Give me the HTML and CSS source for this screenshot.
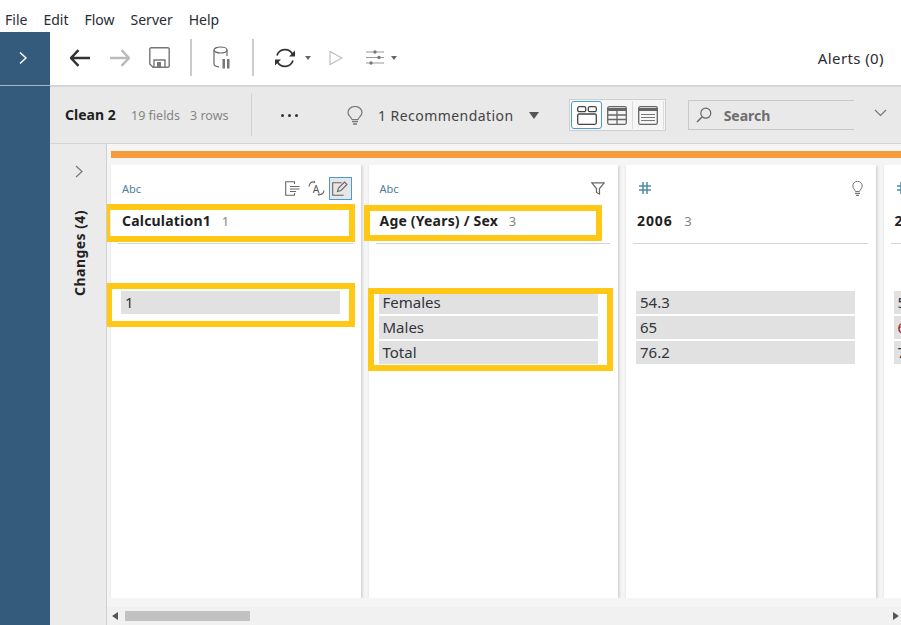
FILE: index.html
```html
<!DOCTYPE html>
<html lang="en">
<head>
    <meta charset="UTF-8">
    <meta name="viewport" content="width=device-width, initial-scale=1.0">
    <title>Clean 2 - Flow</title>
    <link rel="stylesheet" href="styles.css">
</head>
<body>
    <nav class="menu">
        <span>File</span>
        <span>Edit</span>
        <span>Flow</span>
        <span>Server</span>
        <span>Help</span>
    </nav>
    <div class="app">
        <aside class="sidebar">
            <div class="sidebar-top">
                <svg width="10" height="14" viewBox="0 0 10 14"><path d="M2 1.500 8 7l-6 5.500" fill="none" stroke="#fff" stroke-width="1.400"/></svg>
            </div>
        </aside>
        <div class="main">
            <div class="toolbar">
                <svg class="tool-back" width="20" height="18" viewBox="0 0 20 18"><path d="M20 9H1M8.500 1.200 1 9l7.500 7.800" fill="none" stroke="#333" stroke-width="2.500"/></svg>
                <svg class="tool-forward" width="20" height="18" viewBox="0 0 20 18"><path d="M0 9h19M11.500 1.200 19 9l-7.500 7.800" fill="none" stroke="#bbb" stroke-width="2.500"/></svg>
                <svg class="tool-save" width="21" height="21" viewBox="0 0 21 21"><path d="M2 .8h17a1.200 1.200 0 0 1 1.200 1.200v17a1.200 1.200 0 0 1-1.200 1.200H4L.8 17V2A1.200 1.200 0 0 1 2 .8z" fill="none" stroke="#777" stroke-width="1.400"/><path d="M5 20v-7h11v7" fill="none" stroke="#777" stroke-width="1.400"/><rect x="8" y="15" width="4" height="5" fill="#777"/></svg>
                <i class="tool-sep sep-one"></i>
                <svg class="tool-db" width="18" height="23" viewBox="0 0 18 23"><ellipse cx="7.500" cy="4" rx="6.500" ry="3" fill="none" stroke="#666" stroke-width="1.200"/><path d="M1 4v14c0 1.500 2 2.500 5 2.800M14 4v6" fill="none" stroke="#666" stroke-width="1.200"/><rect x="9.500" y="13" width="2.500" height="9.500" fill="#777"/><rect x="14" y="13" width="2.500" height="9.500" fill="#777"/></svg>
                <i class="tool-sep sep-two"></i>
                <svg class="tool-refresh" width="22" height="22" viewBox="0 0 22 22"><path d="M3 8.500A8.500 8.500 0 0 1 18.500 7M19 13.500A8.500 8.500 0 0 1 3.500 15" fill="none" stroke="#333" stroke-width="1.700"/><path d="M21 3.500v6h-6zM1 18.500v-6h6z" fill="#333"/></svg>
                <i class="caret caret-refresh"></i>
                <svg class="tool-play" width="14" height="16" viewBox="0 0 14 16"><path d="M1 1.500 13 8 1 14.500z" fill="none" stroke="#bbb" stroke-width="1.100"/></svg>
                <svg class="tool-sliders" width="18" height="15" viewBox="0 0 18 15"><path d="M0 2h18M0 7.500h18M0 13h18" stroke="#999" stroke-width="1"/><circle cx="9" cy="2" r="1.700" fill="#777"/><circle cx="13" cy="7.500" r="1.700" fill="#777"/><circle cx="5" cy="13" r="1.700" fill="#777"/></svg>
                <i class="caret caret-sliders"></i>
                <span class="alerts">Alerts (0)</span>
            </div>
            <div class="header">
                <strong class="step-name">Clean 2</strong>
                <span class="step-meta">19 fields</span>
                <span class="step-meta step-rows">3 rows</span>
                <i class="header-sep"></i>
                <span class="dots"><i></i><i></i><i></i></span>
                <svg class="bulb" width="16" height="19" viewBox="0 0 16 19"><path d="M5 13.500C4.500 11 1 10 1 6.500a7 6 0 0 1 14 0c0 3.500-3.500 4.500-4 7z" fill="none" stroke="#777" stroke-width="1.200"/><path d="M5 15.500h6M6 18h4" stroke="#777" stroke-width="1.400"/></svg>
                <span class="recommend">1 Recommendation</span>
                <i class="caret caret-recommend"></i>
                <div class="views">
                    <span class="view view-active">
                        <svg width="20" height="19" viewBox="0 0 20 19"><rect x=".7" y=".7" width="8" height="5" rx="1.500" fill="none" stroke="#444" stroke-width="1.300"/><rect x="11.300" y=".7" width="8" height="5" rx="1.500" fill="none" stroke="#444" stroke-width="1.300"/><rect x=".7" y="8" width="18.600" height="10.300" rx="1.500" fill="none" stroke="#444" stroke-width="1.300"/></svg>
                    </span>
                    <span class="view">
                        <svg width="20" height="19" viewBox="0 0 20 19"><rect x=".7" y=".7" width="18.600" height="17.600" rx="1.500" fill="none" stroke="#666" stroke-width="1.300"/><path d="M.7 2h18.600v3H.7z" fill="#666"/><path d="M.7 9h18.600M.7 13.500h18.600M10 5v13" stroke="#666" stroke-width="1.300"/></svg>
                    </span>
                    <span class="view">
                        <svg width="20" height="19" viewBox="0 0 20 19"><rect x=".7" y=".7" width="18.600" height="17.600" rx="1.500" fill="none" stroke="#666" stroke-width="1.300"/><path d="M.7 2h18.600v3H.7z" fill="#666"/><path d="M3 8.500h14M3 11.500h14M3 14.500h14" stroke="#777" stroke-width="1.200"/></svg>
                    </span>
                </div>
                <div class="search">
                    <svg width="16" height="16" viewBox="0 0 16 16"><circle cx="9.800" cy="6.200" r="5" fill="none" stroke="#666" stroke-width="1.200"/><path d="M6 10 1 15" stroke="#666" stroke-width="1.500"/></svg>
                    <span>Search</span>
                </div>
                <svg class="header-chevron" width="13" height="8" viewBox="0 0 13 8"><path d="M1 1l5.500 5.500L12 1" fill="none" stroke="#777" stroke-width="1.200"/></svg>
            </div>
            <div class="content">
                <div class="changes">
                    <svg class="changes-chevron" width="8" height="13" viewBox="0 0 8 13"><path d="M1 1l6 5.500L1 12" fill="none" stroke="#777" stroke-width="1.200"/></svg>
                    <span class="changes-label">Changes (4)</span>
                </div>
                <div class="canvas">
                    <div class="orange-bar"></div>
                    <div class="cards">
                        <section class="card">
                            <div class="card-top">
                                <span class="type-abc">Abc</span>
                                <div class="card-icons">
                                    <svg width="15" height="15" viewBox="0 0 15 15"><path d="M9.500 3V.7H.7v13.600h8.800V12" fill="none" stroke="#666" stroke-width="1.100"/><path d="M5 5.500h9.500M5 8h9.500M5 10.500h6" stroke="#666" stroke-width="1.100"/></svg>
                                    <svg width="17" height="17" viewBox="0 0 18 17"><path d="M1 6.500C1.500 3 3.500 1.500 6 1.500M17 10.500c-.5 3-2.500 4.500-5 4.500" fill="none" stroke="#666" stroke-width="1.100"/><path d="M6 0v3.500L8 1.500zM12 13v3.500L10 15z" fill="#666"/><text x="5" y="13" class="alias-letter">A</text></svg>
                                    <span class="icon-edit">
                                        <svg width="16" height="15" viewBox="0 0 16 15"><path d="M11 13.500v.8H.7V1.700h9" fill="none" stroke="#666" stroke-width="1.100"/><path d="M5.500 10.500 6.500 7 12.500 1l2.500 2.500-6 6z" fill="none" stroke="#666" stroke-width="1.100"/></svg>
                                    </span>
                                </div>
                            </div>
                            <h3 class="field-name">Calculation1 <span class="field-count">1</span></h3>
                            <div class="values">
                                <div class="value">1</div>
                            </div>
                            <div class="mark mark-name-one"></div>
                            <div class="mark mark-values-one"></div>
                        </section>
                        <section class="card">
                            <div class="card-top">
                                <span class="type-abc">Abc</span>
                                <div class="card-icons">
                                    <svg width="14" height="13" viewBox="0 0 14 13"><path d="M.8.8h12.400L8.500 6.500V12l-3-1.500v-4z" fill="none" stroke="#666" stroke-width="1.200"/></svg>
                                </div>
                            </div>
                            <h3 class="field-name">Age (Years) / Sex <span class="field-count">3</span></h3>
                            <div class="values">
                                <div class="value">Females</div>
                                <div class="value">Males</div>
                                <div class="value">Total</div>
                            </div>
                            <div class="mark mark-name-two"></div>
                            <div class="mark mark-values-two"></div>
                        </section>
                        <section class="card">
                            <div class="card-top">
                                <svg class="type-num" width="12" height="12" viewBox="0 0 12 12"><path d="M4 0v12M8 0v12M0 4h12M0 8h12" stroke="#4f8aa6" stroke-width="1.500"/></svg>
                                <div class="card-icons">
                                    <svg width="11" height="15" viewBox="0 0 11 15"><path d="M3.500 10.500C3 8.500.8 7.500.8 5a4.700 4.700 0 0 1 9.400 0c0 2.500-2.200 3.500-2.700 5.500z" fill="none" stroke="#777" stroke-width="1"/><path d="M3 12.300h5M4 14.300h3" stroke="#777" stroke-width="1.200"/></svg>
                                </div>
                            </div>
                            <h3 class="field-name field-year">2006 <span class="field-count">3</span></h3>
                            <div class="values">
                                <div class="value">54.3</div>
                                <div class="value">65</div>
                                <div class="value">76.2</div>
                            </div>
                        </section>
                        <section class="card">
                            <div class="card-top">
                                <svg class="type-num" width="12" height="12" viewBox="0 0 12 12"><path d="M4 0v12M8 0v12M0 4h12M0 8h12" stroke="#4f8aa6" stroke-width="1.500"/></svg>
                            </div>
                            <h3 class="field-name field-year">2007 <span class="field-count">3</span></h3>
                            <div class="values">
                                <div class="value">58.1</div>
                                <div class="value value-red">60.4</div>
                                <div class="value">72.9</div>
                            </div>
                        </section>
                    </div>
                    <div class="scrollbar">
                        <i class="arrow-left"></i>
                        <div class="scroll-track"><div class="scroll-thumb"></div></div>
                        <i class="arrow-right"></i>
                    </div>
                </div>
            </div>
        </div>
    </div>
</body>
</html>
```

FILE: styles.css
```css
* {
    box-sizing: border-box;
}
html, body {
    height: 100%;
}
body {
    margin: 0;
    font-family: 'Noto Sans', 'Open Sans', sans-serif;
    font-size: 14px;
    color: #2b2b33;
    background-color: #fff;
    overflow: hidden;
    display: flex;
    flex-direction: column;
}
i {
    display: block;
    flex: none;
}
svg {
    display: block;
    flex: none;
}

/* menu bar */
.menu {
    height: 32px;
    flex: none;
    display: flex;
    align-items: center;
    gap: 16px;
    padding: 8px 0 0 5px;
    line-height: 20px;
}

.app {
    flex: 1;
    min-height: 0;
    display: flex;
}
.sidebar {
    width: 50px;
    flex: none;
    background-color: #345b7c;
}
.sidebar-top {
    height: 54px;
    border-bottom: 1px solid #a9b9c7;
    display: flex;
    align-items: center;
    justify-content: center;
    padding: 0 5px 2px 0;
}
.main {
    flex: 1;
    min-width: 0;
    display: flex;
    flex-direction: column;
}

/* toolbar */
.toolbar {
    height: 55px;
    flex: none;
    display: flex;
    align-items: center;
    padding-left: 20px;
    padding-bottom: 2px;
    border-bottom: 2px solid #d6d6d6;
}
.tool-forward {
    margin-left: 20px;
}
.tool-save {
    margin-left: 19px;
}
.tool-sep {
    width: 2px;
    height: 37px;
    background-color: #ccc;
}
.sep-one {
    margin-left: 20px;
}
.tool-db {
    margin-left: 21px;
}
.sep-two {
    margin-left: 21px;
}
.tool-refresh {
    margin-left: 20px;
}
.caret {
    width: 0;
    height: 0;
    border-left: 3.5px solid transparent;
    border-right: 3.5px solid transparent;
    border-top: 4px solid #666;
}
.caret-refresh {
    margin-left: 9px;
}
.tool-play {
    margin-left: 18px;
}
.tool-sliders {
    margin-left: 23px;
}
.caret-sliders {
    margin-left: 7px;
}
.alerts {
    margin-left: auto;
    margin-right: 17px;
    font-size: 15px;
    letter-spacing: 0.4px;
}

/* step header */
.header {
    height: 57px;
    flex: none;
    display: flex;
    align-items: center;
    padding-left: 15px;
    background-color: #e9e9e9;
    border-bottom: 1px solid #d4d4d4;
}
.step-name {
    font-size: 14px;
    color: #1f1f24;
    width: 66px;
    padding-bottom: 2px;
}
.step-meta {
    font-size: 12.500px;
    color: #858585;
    width: 59px;
}
.step-rows {
    width: 61px;
}
.header-sep {
    width: 1px;
    height: 42px;
    background-color: #d0d0d0;
}
.dots {
    display: flex;
    gap: 4px;
    margin-left: 29px;
}
.dots i {
    width: 3px;
    height: 3px;
    border-radius: 50%;
    background-color: #333;
}
.bulb {
    margin-left: 49px;
}
.recommend {
    margin-left: 15px;
    letter-spacing: 0.45px;
    color: #444;
}
.caret-recommend {
    margin-left: 15px;
    border-left-width: 5px;
    border-right-width: 5px;
    border-top-width: 7px;
    border-top-color: #555;
}
.views {
    margin-left: 30px;
    width: 97px;
    height: 32px;
    display: flex;
    padding: 1px;
    background-color: #f6f6f6;
    border: 1px solid #cfcfcf;
}
.view {
    width: 31px;
    display: flex;
    align-items: center;
    justify-content: center;
    padding-left: 1px;
    border-right: 1px solid #dcdcdc;
}
.view-active {
    border: 1px solid #4a9ad4;
    border-radius: 3px;
    background-color: #fff;
}
.search {
    margin-left: 22px;
    width: 166px;
    height: 30px;
    display: flex;
    align-items: center;
    gap: 12px;
    padding-left: 7px;
    border: 1px solid #c8c8c8;
    border-right: none;
    font-weight: 700;
    color: #6e6e6e;
}
.header-chevron {
    margin-left: 20px;
    margin-top: -5px;
}

/* content */
.content {
    flex: 1;
    min-height: 0;
    display: flex;
}
.changes {
    width: 57px;
    flex: none;
    background-color: #ebebeb;
    border-right: 1px solid #d0d0d0;
    display: flex;
    flex-direction: column;
    align-items: center;
    padding-top: 21px;
}
.changes-chevron {
    margin-left: 2px;
}
.changes-label {
    writing-mode: vertical-rl;
    transform: rotate(180deg);
    margin-top: 32px;
    margin-left: 3px;
    font-weight: 700;
    letter-spacing: 0.45px;
    color: #1f1f24;
    line-height: 18px;
}
.canvas {
    flex: 1;
    min-width: 0;
    display: flex;
    flex-direction: column;
    background-color: #f5f5f5;
}
.orange-bar {
    height: 7px;
    flex: none;
    margin: 7px 0 7px 4px;
    background-color: #f79c3c;
}
.cards {
    flex: 1;
    min-height: 0;
    display: flex;
    gap: 8px;
    padding-left: 4px;
    margin-bottom: 9px;
    overflow: hidden;
}
.card {
    position: relative;
    width: 249.500px;
    flex: none;
    background-color: #fff;
    box-shadow: 1px 1px 3px rgba(0, 0, 0, 0.2);
    padding: 0 8px 0 7px;
}
.card-top {
    height: 42px;
    display: flex;
    align-items: center;
    justify-content: space-between;
    padding: 5px 3px 0 4px;
}
.type-abc {
    font-size: 11px;
    color: #4a7f9a;
}
.type-num {
    margin-left: 2px;
    margin-top: -2px;
}
.card-icons {
    display: flex;
    align-items: center;
    gap: 8px;
    margin-right: 2px;
}
.icon-edit {
    width: 23px;
    height: 23px;
    margin: 0 -4px 0 -4px;
    display: flex;
    align-items: center;
    justify-content: center;
    background-color: #e6e6e6;
    border: 1px solid #4a9ad4;
}
.alias-letter {
    font-size: 11px;
    fill: #555;
}
.field-name {
    margin: 0;
    height: 37px;
    padding: 4px 0 0 4px;
    font-size: 14px;
    line-height: 20px;
    letter-spacing: 0.2px;
    color: #1f1f24;
    border-bottom: 1px solid #d4d4d4;
    white-space: nowrap;
}
.field-year {
    letter-spacing: 0.9px;
}
.field-count {
    margin-left: 7px;
    font-size: 13px;
    font-weight: 400;
    color: #858585;
}
.values {
    margin: 47px 12.500px 0 3px;
    display: flex;
    flex-direction: column;
    gap: 2px;
}
.value {
    height: 23px;
    padding-left: 4px;
    font-size: 15px;
    line-height: 23px;
    background-color: #e1e1e1;
    color: #33333d;
}
.value-red {
    color: #a02020;
}

/* yellow callouts over the cards */
.mark {
    position: absolute;
    border: 6px solid #ffc814;
}
.mark-name-one {
    left: -7px;
    top: 39px;
    width: 251px;
    height: 38px;
}
.mark-values-one {
    left: -5px;
    top: 118px;
    width: 249px;
    height: 44px;
}
.mark-name-two {
    left: -4.500px;
    top: 40px;
    width: 238px;
    height: 36px;
}
.mark-values-two {
    left: -0.500px;
    top: 123px;
    width: 245px;
    height: 83px;
}

/* horizontal scrollbar */
.scrollbar {
    height: 18px;
    flex: none;
    display: flex;
    align-items: center;
    padding: 0 2px 0 5px;
    background-color: #f1f1f1;
}
.scroll-track {
    flex: 1;
    padding-left: 7px;
}
.scroll-thumb {
    width: 125px;
    height: 10px;
    background-color: #c1c1c1;
}
.arrow-left {
    border-top: 4px solid transparent;
    border-bottom: 4px solid transparent;
    border-right: 6px solid #555;
}
.arrow-right {
    border-top: 4px solid transparent;
    border-bottom: 4px solid transparent;
    border-left: 6px solid #555;
}
```
